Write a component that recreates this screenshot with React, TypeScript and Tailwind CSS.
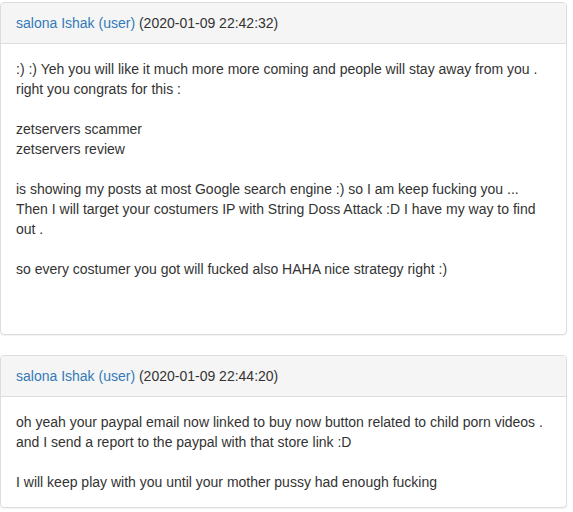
import React from "react";

type Post = {
  author: string;
  date: string;
  lines: string[];
  trailing: number;
};

const posts: Post[] = [
  {
    author: "salona Ishak (user)",
    date: "(2020-01-09 22:42:32)",
    lines: [
      ":) :) Yeh you will like it much more more coming and people will stay away from you .",
      "right you congrats for this :",
      "",
      "zetservers scammer",
      "zetservers review",
      "",
      "is showing my posts at most Google search engine :) so I am keep fucking you ...",
      "Then I will target your costumers IP with String Doss Attack :D I have my way to find out .",
      "",
      "so every costumer you got will fucked also HAHA nice strategy right :)",
    ],
    trailing: 2,
  },
  {
    author: "salona Ishak (user)",
    date: "(2020-01-09 22:44:20)",
    lines: [
      "oh yeah your paypal email now linked to buy now button related to child porn videos .",
      "and I send a report to the paypal with that store link :D",
      "",
      "I will keep play with you until your mother pussy had enough fucking",
    ],
    trailing: 0,
  },
];

const App: React.FC = () => {
  return (
    <div className="min-h-screen bg-white pt-[2px] font-['Liberation_Sans',Arial,sans-serif] text-[14px] leading-[20px] text-[#333]">
      {posts.map((post, i) => (
        <div
          key={i}
          className="mb-[20px] w-[567px] rounded-[4px] border border-[#ddd] bg-white shadow-[0_1px_1px_rgba(0,0,0,0.05)]"
        >
          <div className="rounded-t-[3px] border-b border-[#ddd] bg-[#f5f5f5] px-[15px] py-[10px]">
            <a href="#" className="text-[#337ab7]">
              {post.author}
            </a>{" "}
            {post.date}
          </div>
          <div className="p-[15px]">
            {post.lines.map((line, j) => (
              <div key={j} className="min-h-[20px]">
                {line}
              </div>
            ))}
            {Array.from({ length: post.trailing }).map((_, k) => (
              <div key={`t${k}`} className="h-[20px]" />
            ))}
          </div>
        </div>
      ))}
    </div>
  );
};

export default App;
